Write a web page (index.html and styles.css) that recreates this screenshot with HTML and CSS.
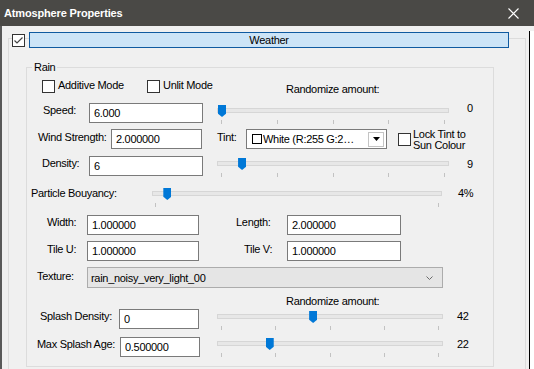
FILE: index.html
```html
<!DOCTYPE html>
<html lang="en">
<head>
  <meta charset="UTF-8">
  <title>Atmosphere Properties</title>
  <link rel="stylesheet" href="styles.css">
</head>
<body>

  <div class="titlebar">
    <span class="title">Atmosphere Properties</span>
    <svg class="close" viewBox="0 0 11 11"><path d="M0.5 0.5 L10.5 10.5 M10.5 0.5 L0.5 10.5" stroke="#fff" stroke-width="1.1" fill="none"/></svg>
  </div>

  <div class="client">
    <div class="panel">
      <div class="frame">

        <!-- Weather header -->
        <div class="frame-head">
          <span class="check">
            <svg viewBox="0 0 11 11"><path d="M1.5 5.5 L4 8 L9.5 2.5" stroke="#444" stroke-width="1.2" fill="none"/></svg>
          </span>
          <div class="weather">Weather</div>
        </div>

        <!-- Rain group -->
        <div class="rain">
          <div class="caption">Rain</div>

          <div class="rows">
            <div class="row">
              <label class="opt opt-additive"><span class="check"></span><span class="opt-text">Additive Mode</span></label>
              <label class="opt opt-unlit"><span class="check"></span><span class="opt-text">Unlit Mode</span></label>
              <span class="lbl lbl-random">Randomize amount:</span>
            </div>

            <div class="row">
              <span class="lbl lbl-speed">Speed:</span>
              <input class="field w-114 mt-2" value="6.000">
              <div class="slider sl-main mt-4" style="--p:0">
                <div class="track"></div>
                <div class="ticks"><i></i><i></i><i></i><i></i><i></i></div>
                <div class="thumb"></div>
              </div>
              <span class="val val-speed">0</span>
            </div>

            <div class="row">
              <span class="lbl lbl-wind">Wind Strength:</span>
              <input class="field w-91" value="2.000000">
              <span class="lbl lbl-tint">Tint:</span>
              <div class="tint-box">
                <span class="swatch"></span>
                <span class="tint-text">White (R:255 G:2…</span>
                <span class="drop-btn"><svg viewBox="0 0 7 4"><path d="M0 0 H7 L3.5 4 Z" fill="#000"/></svg></span>
              </div>
              <span class="check lock-check"></span>
              <span class="lock-text">Lock Tint to<br>Sun Colour</span>
            </div>

            <div class="row">
              <span class="lbl lbl-density">Density:</span>
              <input class="field w-114" value="6">
              <div class="slider sl-main mt-2" style="--p:0.09">
                <div class="track"></div>
                <div class="ticks"><i></i><i></i><i></i><i></i><i></i></div>
                <div class="thumb"></div>
              </div>
              <span class="val val-density">9</span>
            </div>

            <div class="row">
              <span class="lbl lbl-buoy">Particle Bouyancy:</span>
              <div class="slider sl-buoy mt-2" style="--p:0.04">
                <div class="track"></div>
                <div class="ticks"><i></i><i></i></div>
                <div class="thumb"></div>
              </div>
              <span class="val val-buoy">4%</span>
            </div>

            <div class="row">
              <span class="lbl lbl-width">Width:</span>
              <input class="field w-112" value="1.000000">
              <span class="lbl lbl-length">Length:</span>
              <input class="field w-114" value="2.000000">
            </div>

            <div class="row">
              <span class="lbl lbl-tileu">Tile U:</span>
              <input class="field w-112" value="1.000000">
              <span class="lbl lbl-tilev">Tile V:</span>
              <input class="field w-114" value="1.000000">
            </div>

            <div class="row">
              <span class="lbl lbl-texture">Texture:</span>
              <div class="select">
                <span>rain_noisy_very_light_00</span>
                <svg class="chev" viewBox="0 0 7 4"><path d="M0.5 0.5 L3.5 3.5 L6.5 0.5" stroke="#6b6b6b" fill="none"/></svg>
              </div>
            </div>

            <div class="row">
              <span class="lbl lbl-random2">Randomize amount:</span>
            </div>

            <div class="row">
              <span class="lbl lbl-splash">Splash Density:</span>
              <input class="field w-80" value="0">
              <div class="slider sl-splash splash-gap mt-2" style="--p:0.42">
                <div class="track"></div>
                <div class="ticks"><i></i><i></i><i></i><i></i><i></i></div>
                <div class="thumb"></div>
              </div>
              <span class="val val-splash">42</span>
            </div>

            <div class="row">
              <span class="lbl lbl-age">Max Splash Age:</span>
              <input class="field w-80" value="0.500000">
              <div class="slider sl-splash age-gap mt-1" style="--p:0.22">
                <div class="track"></div>
                <div class="ticks"><i></i><i></i><i></i><i></i><i></i></div>
                <div class="thumb"></div>
              </div>
              <span class="val val-splash">22</span>
            </div>
          </div>
        </div>

      </div>
    </div>
    <div class="side"></div>
  </div>

</body>
</html>
```

FILE: styles.css
```css
* {
  box-sizing: border-box;
}

html, body {
  height: 100%;
}

body {
  margin: 0;
  font-family: "Liberation Sans", Arial, sans-serif;
  font-size: 11px;
  letter-spacing: -0.3px;
  color: #000;
  background: #f0f0f0;
  overflow: hidden;
}

.titlebar {
  height: 26px;
  background: #4a4946;
  color: #fff;
  display: flex;
  align-items: center;
  justify-content: space-between;
  padding: 0 15px 0 4px;
}

.title {
  font-weight: bold;
  letter-spacing: -0.15px;
}

.close {
  width: 11px;
  height: 11px;
}

.client {
  display: flex;
  height: 343px;
  overflow: hidden;
  border-left: 2px solid #595959;
}

.panel {
  width: 527px;
  flex: none;
}

.side {
  flex: 1;
  margin-top: 5px;
  border-left: 1px solid #000;
  background: #fff;
}

.frame {
  margin: 12px 0 0 6px;
  width: 518px;
  height: 400px;
  border: 1px solid #dcdcdc;
}

.frame-head {
  display: flex;
  margin: -7px 0 0 3px;
}

.check {
  display: block;
  width: 13px;
  height: 13px;
  border: 1px solid #333;
  background: #fff;
  flex: none;
}

.check svg {
  display: block;
  width: 11px;
  height: 11px;
}

.frame-head .check {
  margin-top: 2px;
}

.weather {
  margin-left: 4px;
  width: 480px;
  height: 16px;
  border: 1px solid #0f5aa0;
  background: #cce4f7;
  text-align: center;
  line-height: 14px;
}

.rain {
  margin: 19px 0 0 17px;
  width: 468px;
  height: 300px;
  border: 1px solid #dcdcdc;
}

.caption {
  margin: -7px 0 0 5px;
  padding: 0 2px;
  height: 13px;
  line-height: 13px;
  width: max-content;
  background: #f0f0f0;
}

.rows {
  margin-top: 4px;
  display: grid;
  grid-template-rows: 23px 28px 27px 30px 29px 26px 26px 28px 14px 28px 28px;
}

.row {
  display: flex;
  align-items: flex-start;
}

.lbl {
  flex: none;
  line-height: 13px;
  white-space: nowrap;
  margin-top: 1px;
}

/* check options */
.opt {
  display: flex;
  flex: none;
}

.opt .check {
  margin-top: 2px;
}

.opt-text {
  margin: 1px 0 0 3px;
  line-height: 13px;
}

.opt-additive { margin-left: 15px; width: 105px; }
.opt-unlit { width: 139px; }
.lbl-random { margin-top: 5px; }

/* labels */
.lbl-speed { margin: 3px 0 0 16px; width: 46px; }
.lbl-wind { margin: 2px 0 0 11px; width: 73px; }
.lbl-tint { margin: 2px 0 0 15px; width: 29px; }
.lbl-density { margin-left: 15px; width: 47px; }
.lbl-buoy { margin-left: 4px; width: 121px; }
.lbl-width { margin-left: 20px; width: 40px; }
.lbl-length { margin-left: 37px; width: 51px; }
.lbl-tileu { margin: 2px 0 0 20px; width: 40px; }
.lbl-tilev { margin: 2px 0 0 45px; width: 43px; }
.lbl-texture { margin: 3px 0 0 10px; width: 50px; }
.lbl-random2 { margin: 0 0 0 259px; }
.lbl-splash { margin-left: 13px; width: 79px; }
.lbl-age { margin-left: 10px; width: 83px; }

/* text boxes */
.field {
  flex: none;
  height: 20px;
  border: 1px solid #7a7a7a;
  background: #fff;
  padding: 0 4px;
  font: inherit;
  letter-spacing: inherit;
  color: #000;
  outline: none;
}

.w-80 { width: 80px; }
.w-91 { width: 91px; }
.w-112 { width: 112px; }
.w-114 { width: 114px; }

.mt-1 { margin-top: 1px; }
.mt-2 { margin-top: 2px; }
.mt-4 { margin-top: 4px; }

/* track bars */
.slider {
  --pad: 4px;
  position: relative;
  flex: none;
  height: 19px;
}

.sl-main { margin-left: 14px; width: 232px; }
.sl-buoy { --pad: 3px; width: 290px; }
.sl-splash { width: 226px; }
.splash-gap { margin-left: 18px; }
.age-gap { margin-left: 17px; }

.track {
  margin-top: 3px;
  height: 5px;
  border: 1px solid #d6d6d6;
  background: #e7e7e7;
}

.ticks {
  display: flex;
  justify-content: space-between;
  padding: 0 var(--pad);
  margin-top: 7px;
}

.ticks i {
  width: 1px;
  height: 4px;
  background: #c2c2c2;
}

.thumb {
  position: absolute;
  top: 0;
  left: calc(var(--pad) - 3px + (100% - 2 * var(--pad) - 1px) * var(--p));
  width: 8px;
  height: 12px;
  background: #0078d7;
  clip-path: polygon(0 0, 100% 0, 100% 72%, 50% 100%, 0 72%);
}

.val {
  flex: none;
  line-height: 13px;
  margin-top: 1px;
}

.val-speed { margin-left: 18px; }
.val-density { margin: 2px 0 0 18px; }
.val-buoy { margin-left: 16px; }
.val-splash { margin-left: 14px; }

/* tint combo */
.tint-box {
  flex: none;
  display: flex;
  align-items: center;
  width: 141px;
  height: 20px;
  border: 1px solid #7a7a7a;
  background: #fff;
  padding: 0 2px 0 5px;
}

.swatch {
  flex: none;
  width: 10px;
  height: 10px;
  border: 1px solid #000;
  background: #fff;
}

.tint-text {
  margin-left: 1px;
  white-space: nowrap;
  overflow: hidden;
}

.drop-btn {
  flex: none;
  margin-left: auto;
  width: 16px;
  height: 15px;
  border: 1px solid #c4c4c4;
  display: flex;
  align-items: center;
  justify-content: center;
}

.drop-btn svg {
  width: 7px;
  height: 4px;
}

.lock-check {
  margin: 4px 0 0 11px;
}

.lock-text {
  margin-left: 2px;
  line-height: 11px;
}

/* texture combo */
.select {
  flex: none;
  display: flex;
  align-items: center;
  justify-content: space-between;
  width: 356px;
  height: 21px;
  border: 1px solid #acacac;
  background: #e5e5e5;
  padding: 0 9px 0 3px;
}

.chev {
  width: 7px;
  height: 4px;
}
```
